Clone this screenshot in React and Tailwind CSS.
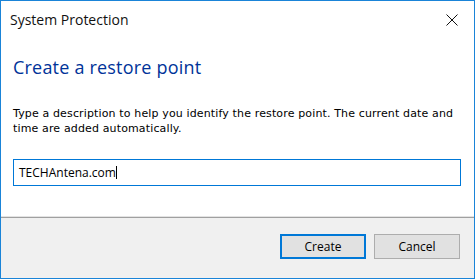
export default function App() {
  const seg = { fontFamily: '"Open Sans", "Noto Sans", sans-serif' };
  return (
    <div className="w-[475px] h-[279px] border border-[#1a84d8] bg-white flex flex-col overflow-hidden">
      <div className="h-[30px] flex items-start justify-between">
        <div className="pl-[9px] pt-[9px] text-[14px] leading-[20px] text-[#111]" style={seg}>
          System Protection
        </div>
        <svg width="12" height="12" viewBox="0 0 12 12" className="mt-[13px] mr-[16px]">
          <path d="M0.5 0.5 L11.5 11.5 M11.5 0.5 L0.5 11.5" stroke="#111" strokeWidth="1" fill="none" />
        </svg>
      </div>
      <div className="flex-1 flex flex-col pl-[12px] pr-[13px]">
        <div className="mt-[24px] text-[18px] leading-[24px] tracking-[0.2px] text-[#003399]" style={seg}>
          Create a restore point
        </div>
        <div className="mt-[27px] text-[11px] leading-[15px] tracking-[0.14px] text-black whitespace-nowrap" style={{ fontFamily: '"DejaVu Sans", Verdana, sans-serif' }}>
          Type a description to help you identify the restore point. The current date and
          <br />
          time are added automatically.
        </div>
        <div className="mt-[23px] h-[27px] w-[448px] border border-[#0078d7] flex items-center pl-[5px]">
          <span className="text-[12px] leading-[16px] text-black" style={seg}>TECHAntena.com</span>
          <span className="w-px h-[13px] bg-black"></span>
        </div>
      </div>
      <div className="h-[61px] bg-[#f0f0f0] border-t border-[#a0a0a0] shadow-[0_-1px_0_#e3e3e3] flex justify-end items-start pt-[16px] pr-[14px] gap-[8px]">
        <button className="w-[86px] h-[25px] border-2 border-[#0078d7] bg-[#e1e1e1] text-[12px] text-black flex items-center justify-center" style={seg}>
          Create
        </button>
        <button className="w-[86px] h-[25px] border border-[#adadad] bg-[#e1e1e1] text-[12px] text-black flex items-center justify-center" style={seg}>
          Cancel
        </button>
      </div>
    </div>
  );
}
